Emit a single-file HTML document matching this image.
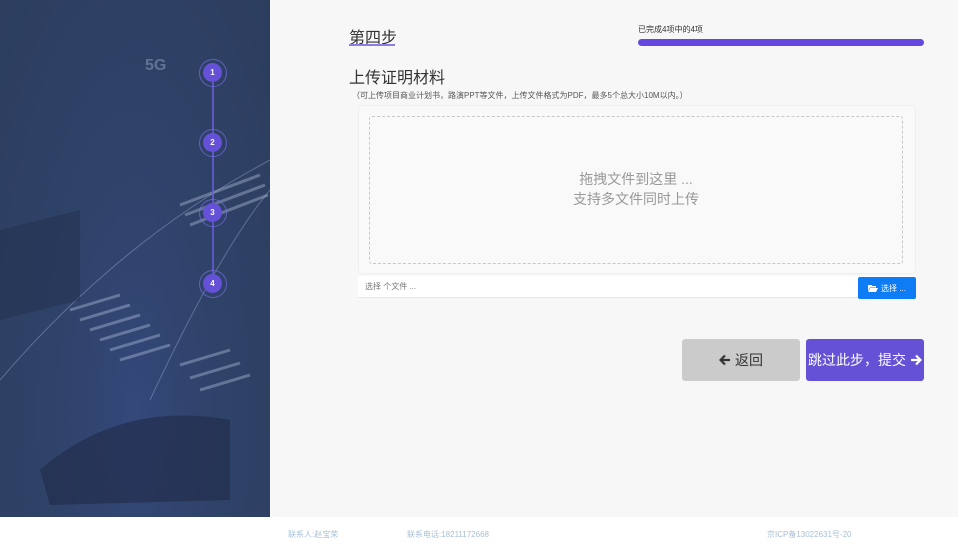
<!DOCTYPE html>
<html><head><meta charset="utf-8"><style>
*{margin:0;padding:0;box-sizing:border-box}
body{width:958px;height:549px;background:#f7f7f7;font-family:"Liberation Sans","Noto Sans CJK SC",sans-serif;position:relative;overflow:hidden}
.left{position:absolute;left:0;top:0;width:270px;height:517px;background:radial-gradient(ellipse at 50% 80%,#34487a 0%,#2f4268 45%,#2c3d5e 100%)}
.foot{position:absolute;left:0;top:517px;width:958px;height:32px;background:#fff;font-size:8px;color:#a9c0d6}
.foot span{position:absolute;top:12px}
.step{position:absolute;left:199px;width:28px;height:28px;border-radius:50%;border:1.5px solid rgba(120,110,230,.7);}
.step i{position:absolute;left:3px;top:3px;width:19px;height:19px;border-radius:50%;background:#6451d8;color:#fff;font-style:normal;font-weight:bold;font-size:8px;text-align:center;line-height:19px}
.btn{position:absolute;top:339px;width:118px;height:42px;border-radius:3px;font-size:14px;display:flex;align-items:center;justify-content:center;gap:4px}
</style></head><body>
<div class="left">
<svg width="270" height="517" style="position:absolute;left:0;top:0">
<path d="M0 380 Q120 240 270 160" stroke="rgba(200,220,255,.3)" fill="none"/>
<path d="M150 400 Q220 250 270 190" stroke="rgba(200,220,255,.3)" fill="none"/>
<g stroke="rgba(200,215,240,.35)" stroke-width="3">
<line x1="70" y1="310" x2="120" y2="295"/><line x1="80" y1="320" x2="130" y2="305"/><line x1="90" y1="330" x2="140" y2="315"/><line x1="100" y1="340" x2="150" y2="325"/><line x1="110" y1="350" x2="160" y2="335"/><line x1="120" y1="360" x2="170" y2="345"/><line x1="180" y1="365" x2="230" y2="350"/><line x1="190" y1="378" x2="240" y2="363"/><line x1="200" y1="390" x2="250" y2="375"/>
<line x1="180" y1="205" x2="260" y2="175"/><line x1="185" y1="215" x2="265" y2="185"/><line x1="190" y1="225" x2="268" y2="195"/>
</g>
<path d="M40 470 Q120 400 230 420 L230 500 L50 505 Z" fill="#1f2a48" opacity=".6"/>
<path d="M0 230 L80 210 L80 300 L0 320 Z" fill="#22304d" opacity=".5"/>
<text x="145" y="70" fill="rgba(190,210,240,.35)" font-size="16" font-weight="bold" font-family="Liberation Sans">5G</text>
<line x1="213" y1="72" x2="213" y2="284" stroke="#6b5fe0" stroke-width="1.5"/>
</svg>
<div class="step" style="top:59px"><i>1</i></div>
<div class="step" style="top:129px"><i>2</i></div>
<div class="step" style="top:199px"><i>3</i></div>
<div class="step" style="top:270px"><i>4</i></div>
</div>
<div style="position:absolute;left:349px;top:24px;font-size:16px;color:#333">第四步</div>
<div style="position:absolute;left:349px;top:44px;width:46px;height:2px;background:#8a7fe0"></div>
<div style="position:absolute;left:638px;top:24px;font-size:8px;color:#333">已完成4项中的4项</div>
<div style="position:absolute;left:638px;top:39px;width:286px;height:7px;border-radius:4px;background:#6448e0"></div>
<div style="position:absolute;left:349px;top:64px;font-size:16px;color:#333">上传证明材料</div>
<div style="position:absolute;left:352px;top:90px;font-size:8px;color:#555">（可上传项目商业计划书，路演PPT等文件，上传文件格式为PDF，最多5个总大小10M以内。）</div>
<div style="position:absolute;left:358px;top:105px;width:558px;height:169px;background:#f9f9f9;border:1px solid #eee;border-radius:4px"></div>
<div style="position:absolute;left:369px;top:116px;width:534px;height:148px;border:1px dashed #c8c8c8;border-radius:3px;text-align:center;color:#999;font-size:14px;line-height:20px;padding-top:52px">拖拽文件到这里 ...<br>支持多文件同时上传</div>
<div style="position:absolute;left:358px;top:276px;width:558px;height:22px;background:#fff;border-bottom:1px solid #e5e5e5;font-size:8px;color:#777;line-height:22px;padding-left:7px">选择 个文件 ...</div>
<div style="position:absolute;left:858px;top:277px;width:58px;height:22px;background:#0d7cf5;color:#fff;font-size:8px;display:flex;align-items:center;justify-content:center;gap:3px;border-radius:2px"><svg width="10" height="8" viewBox="0 0 10 8"><path d="M0 1h3.5l1 1H8v1.5H2L0 7Z M2.2 4H10L8 8H0Z" fill="#fff"/></svg>选择 ...</div>
<div class="btn" style="left:682px;background:#cbcbcb;color:#333"><svg width="12" height="12" viewBox="0 0 12 12"><path d="M11 6H2M6 1.5L1.5 6 6 10.5" stroke="#333" stroke-width="2.2" fill="none"/></svg>返回</div>
<div class="btn" style="left:806px;background:#6451d6;color:#fff">跳过此步，提交<svg width="12" height="12" viewBox="0 0 12 12"><path d="M1 6h9M6 1.5L10.5 6 6 10.5" stroke="#fff" stroke-width="2.2" fill="none"/></svg></div>
<div class="foot"><span style="left:288px">联系人:赵宝荣</span><span style="left:407px">联系电话:18211172668</span><span style="left:767px">京ICP备13022631号-20</span></div>
</body></html>
